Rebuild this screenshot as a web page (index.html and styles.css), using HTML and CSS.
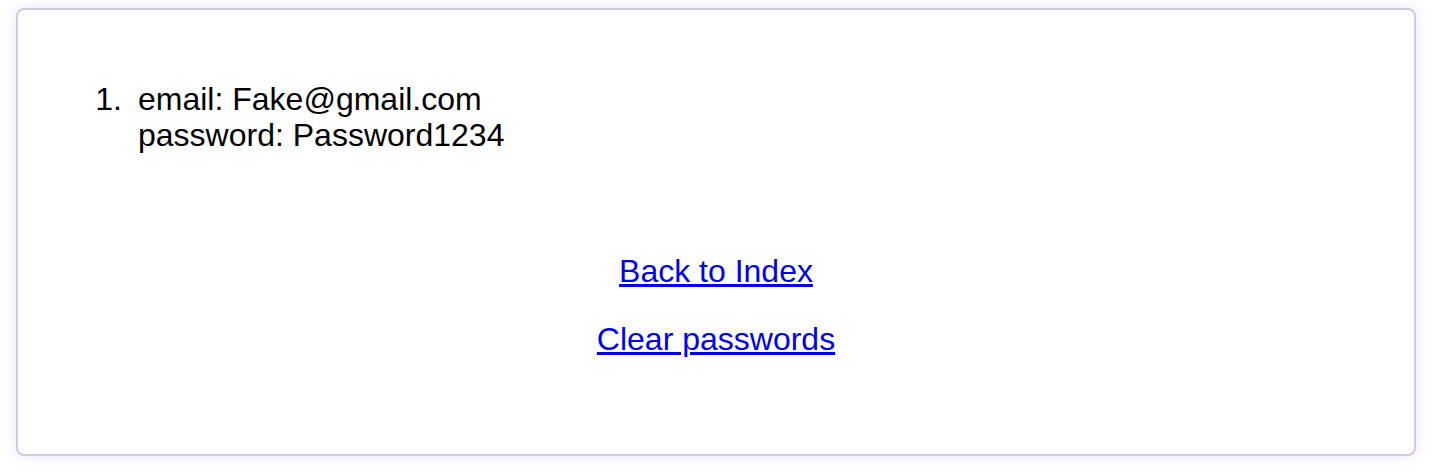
FILE: index.html
```html
<!DOCTYPE html>
<html>
<head>
<meta charset="utf-8">
<link rel="stylesheet" href="styles.css">
</head>
<body>
<div class="card">
  <ol class="list">
    <li>email: Fake@gmail.com<br>password: Password1234</li>
  </ol>
  <div class="links">
    <p><a href="#">Back to Index</a></p>
    <p><a href="#">Clear passwords</a></p>
  </div>
</div>
</body>
</html>
```
FILE: styles.css
```css
html, body {
  margin: 0;
  background: #ffffff;
}
body {
  padding: 8px 18px 16px 16px;
  font-family: "Liberation Sans", Arial, sans-serif;
  font-size: 32px;
  line-height: 36px;
  color: #000;
}
.card {
  box-sizing: border-box;
  width: 1400px;
  height: 448px;
  border: 2px solid #d3c7e6;
  border-radius: 8px;
  box-shadow: 0 0 14px rgba(150, 120, 200, 0.18);
  padding: 39px 80px 0 80px;
}
.list {
  margin: 32px 0;
  padding-left: 40px;
}
.list li::marker {
  content: counter(list-item) ".\2002";
}
.links {
  text-align: center;
  margin-top: 100px;
}
.links p {
  margin: 32px 0;
}
.links a {
  color: #0000ee;
}
```
